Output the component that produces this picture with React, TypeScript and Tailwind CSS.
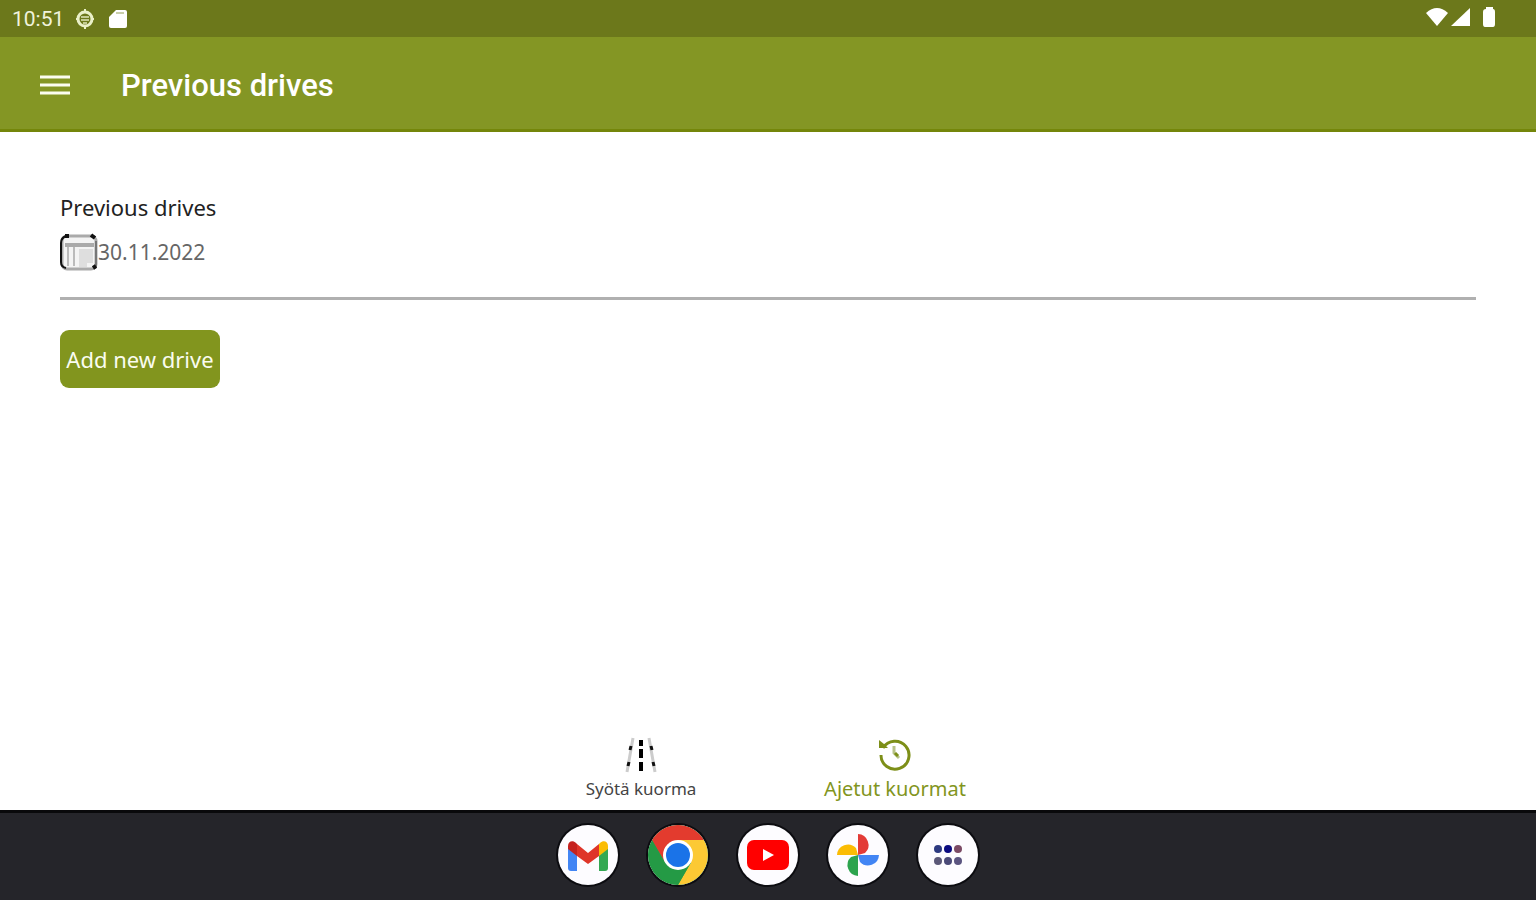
import type { ReactNode } from 'react';

const GmailIcon = () => (
  <svg viewBox="0 0 60 60" className="size-full">
    <path d="M10 22v21q0 3 3 3h6V27Z" fill="#4285f4" />
    <path d="M50 22v21q0 3-3 3h-6V27Z" fill="#34a853" />
    <path d="M41 19v12l9-7v-3c0-5-5-6-8-3Z" fill="#fbbc04" />
    <path d="M19 19v12l11 8 11-8V19l-11 9Z" fill="#df3529" />
    <path d="M10 21v3l9 7V19l-1-1c-3-3-8-2-8 3Z" fill="#c5221f" />
  </svg>
);

const ChromeIcon = () => (
  <svg viewBox="0 0 60 60" className="size-full">
    <circle cx="30" cy="30" r="30" fill="#34a853" />
    <path d="M4 15A30 30 0 0 1 56 15H30L17 37.500Z" fill="#e33b2e" />
    <path d="M56 15A30 30 0 0 1 30 60L43 37.500 30 15Z" fill="#fcc934" />
    <path d="M4 15 17 37.500 30 45 43 37.500 30 60A30 30 0 0 1 4 15Z" fill="#249a45" />
    <circle cx="30" cy="30" r="15" fill="#fff" />
    <circle cx="30" cy="30" r="12" fill="#1a73e8" />
  </svg>
);

const YoutubeIcon = () => (
  <svg viewBox="0 0 60 60" className="size-full">
    <rect x="9" y="15" width="42" height="30" rx="7" fill="#ff0000" />
    <path d="M25 24v12l11-6Z" fill="#fff" />
  </svg>
);

const PhotosIcon = () => (
  <svg viewBox="0 0 60 60" className="size-full">
    <path d="M30 9a11 11 0 0 1 7 19l-7 2Z" fill="#e33b37" />
    <path d="M51 30a11 11 0 0 1-19 7l-2-7Z" fill="#4285f4" />
    <path d="M30 51a11 11 0 0 1-7-19l7-2Z" fill="#2da44e" />
    <path d="M9 30a11 11 0 0 1 19-7l2 7Z" fill="#fbbc04" />
  </svg>
);

const AppsIcon = () => (
  <svg viewBox="0 0 60 60" className="size-full">
    <circle cx="20" cy="24" r="4" fill="#2d3a80" />
    <circle cx="30" cy="24" r="4" fill="#0b0b80" />
    <circle cx="40" cy="24" r="4" fill="#7b4a65" />
    <circle cx="20" cy="36" r="4" fill="#5b5878" />
    <circle cx="30" cy="36" r="4" fill="#4b4a78" />
    <circle cx="40" cy="36" r="4" fill="#5b5480" />
  </svg>
);

const CalendarIcon = () => (
  <svg viewBox="0 0 38 38" className="size-[38px]" fill="none">
    <rect x="2" y="3" width="34" height="33" rx="5" fill="#f4f4f4" stroke="#aaa" strokeWidth="3" />
    <path d="M5 12h29" stroke="#aaa" strokeWidth="4" />
    <path d="M19 16h14v14h-6v4h-8Z" fill="#dedede" />
    <path d="M8 14v19M14 14v19" stroke="#bbb" strokeWidth="2" />
    <path d="M6 35q-5-1-5-6V10q0-5 5-7" stroke="#111" strokeWidth="2" />
    <path d="M36 8v26" stroke="#777" strokeWidth="2" />
    <path d="M7 1v4M31 2l4 3M33 35l3-2" stroke="#111" strokeWidth="4" />
  </svg>
);

const RoadIcon = () => (
  <svg viewBox="0 0 32 36" className="h-9 w-8" fill="none">
    <path d="M8 1 2 35M24 1l6 34" stroke="#ccc" strokeWidth="3" />
    <path d="m6 9-1 4M4 25l-1 4M26 9l1 4M28 25l1 4" stroke="#111" strokeWidth="3" />
    <path d="M16 3v6M16 12v9M16 25v9" stroke="#000" strokeWidth="4" />
  </svg>
);

const HistoryIcon = () => (
  <svg viewBox="0 0 32 36" className="h-9 w-8" fill="none" stroke="#7d8f18">
    <path d="M4 11A14 14 0 1 1 2 18" strokeWidth="3" />
    <path d="M0 3v8h9L5 7Z" fill="#7d8f18" stroke="none" />
    <path d="M15 9v7l5 5" stroke="#b9c389" strokeWidth="3" />
    <path d="m16 16 3 3" strokeWidth="3" />
  </svg>
);

const dockApps: { name: string; icon: ReactNode }[] = [
  { name: 'Gmail', icon: <GmailIcon /> },
  { name: 'Chrome', icon: <ChromeIcon /> },
  { name: 'YouTube', icon: <YoutubeIcon /> },
  { name: 'Photos', icon: <PhotosIcon /> },
  { name: 'All apps', icon: <AppsIcon /> },
];

function StatusBar() {
  return (
    <div className="flex h-[37px] items-center justify-between bg-[#6c781b] pr-10 pl-3 text-white">
      <div className="flex items-center gap-3">
        <span className="font-[Roboto,sans-serif] text-[21px] leading-6 text-[#f0f3dc]">10:51</span>
        <svg viewBox="0 0 20 20" className="size-5" fill="none">
          <circle cx="9" cy="10" r="7" stroke="#eaf0c8" strokeWidth="3" />
          <path d="M9 0v3M9 17v3M0 10h3M15 10h3" stroke="#eaf0c8" strokeWidth="2" />
          <path d="M5 8h8M5 11h8M7 14h4" stroke="#c3cb93" strokeWidth="2" />
        </svg>
        <svg viewBox="0 0 20 20" className="size-5" fill="#fff">
          <path d="M8 1h9q2 0 2 2v14q0 2-2 2H3q-2 0-2-2V8Z" />
          <path d="M8 4h8" stroke="#c9cfaa" strokeWidth="2" />
        </svg>
      </div>
      <div className="flex items-center gap-[3px] pb-1">
        <svg viewBox="0 0 22 20" className="h-5 w-[22px]" fill="#fff">
          <path d="M0 6Q11-4 22 6L11 19Z" />
        </svg>
        <svg viewBox="0 0 20 20" className="size-5" fill="#fff">
          <path d="M19 1v18H0Z" />
        </svg>
        <svg viewBox="0 0 22 22" className="size-[22px]" fill="#fff">
          <path d="M12 1h7v2q2 0 2 3v12q0 3-2 3h-8q-2 0-2-3V6q0-3 3-3Z" />
        </svg>
      </div>
    </div>
  );
}

export default function App() {
  return (
    <div className="flex min-h-screen flex-col bg-white font-['Noto_Sans',sans-serif] text-[#222]">
      <StatusBar />

      <header className="flex h-[95px] items-center gap-[51px] border-b-3 border-[#74860a] bg-[#849624] pt-1 pl-10 text-white">
        <button type="button" aria-label="Open menu">
          <svg viewBox="0 0 30 20" className="h-5 w-[30px]" stroke="#fbfdf0" strokeWidth="3">
            <path d="M0 2h30M0 10h30M0 18h30" />
          </svg>
        </button>
        <h1 className="pt-0.5 font-[Roboto,sans-serif] text-[31px] leading-9 font-medium">Previous drives</h1>
      </header>

      <main className="flex flex-1 flex-col items-start px-[60px] pt-[61px]">
        <h2 className="text-[22px] leading-7">Previous drives</h2>
        <button
          type="button"
          className="mt-3 flex w-full items-center border-b-3 border-[#b0b0b0] pb-[26px] text-[21px] leading-7 text-[#666]"
        >
          <CalendarIcon />
          <span>30.11.2022</span>
        </button>
        <button
          type="button"
          className="mt-[30px] h-[58px] w-40 rounded-[9px] bg-[#82951e] text-[22px] leading-7 whitespace-nowrap text-[#fafcf0]"
        >
          Add new drive
        </button>
      </main>

      <nav className="flex justify-center pb-[9px]">
        <a href="#load" className="flex w-[254px] flex-col items-center gap-1 text-[#444]">
          <RoadIcon />
          <span className="text-[17px] leading-6">Syötä kuorma</span>
        </a>
        <a href="#history" className="flex w-[254px] flex-col items-center gap-1 text-[#82951e]">
          <HistoryIcon />
          <span className="text-[20px] leading-6">Ajetut kuormat</span>
        </a>
      </nav>

      <footer className="flex h-[90px] items-center justify-center gap-[30px] border-t-3 border-[#09090b] bg-[#25252a] pb-[3px]">
        {dockApps.map(app => (
          <button
            key={app.name}
            type="button"
            aria-label={app.name}
            className="size-[60px] overflow-hidden rounded-full bg-[#fdfcff] ring-2 ring-[#0c0c10]"
          >
            {app.icon}
          </button>
        ))}
      </footer>
    </div>
  );
}
